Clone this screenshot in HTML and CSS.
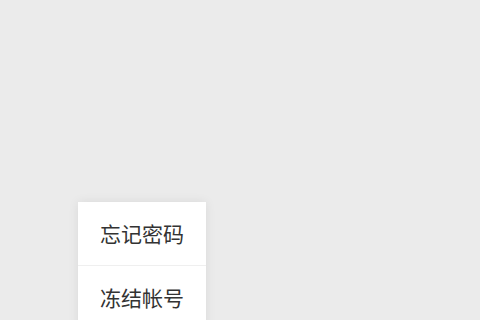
FILE: index.html
```html
<!DOCTYPE html>
<html lang="zh">
<head>
<meta charset="utf-8">
<link rel="stylesheet" href="styles.css">
</head>
<body>
<div class="page">
  <div class="spacer"></div>
  <ul class="menu">
    <li class="item">忘记密码</li>
    <li class="item">冻结帐号</li>
  </ul>
</div>
</body>
</html>
```
FILE: styles.css
```css
html, body {
  margin: 0;
  padding: 0;
  background: #ebebeb;
  overflow: hidden;
}
.page {
  width: 480px;
  height: 320px;
  display: flex;
  flex-direction: column;
}
.spacer {
  height: 202px;
  flex: none;
}
.menu {
  list-style: none;
  margin: 0 0 0 78px;
  padding: 0;
  width: 128px;
  background: #ffffff;
  box-shadow: 0 0 10px rgba(0, 0, 0, 0.08);
  font-family: "Noto Sans CJK SC", "Noto Sans", sans-serif;
}
.item {
  height: 64px;
  padding-bottom: 2px;
  display: flex;
  align-items: center;
  justify-content: center;
  font-size: 21px;
  color: #333333;
  border-bottom: 1px solid #efefef;
  box-sizing: border-box;
}
.item:last-child {
  border-bottom: none;
}
```
